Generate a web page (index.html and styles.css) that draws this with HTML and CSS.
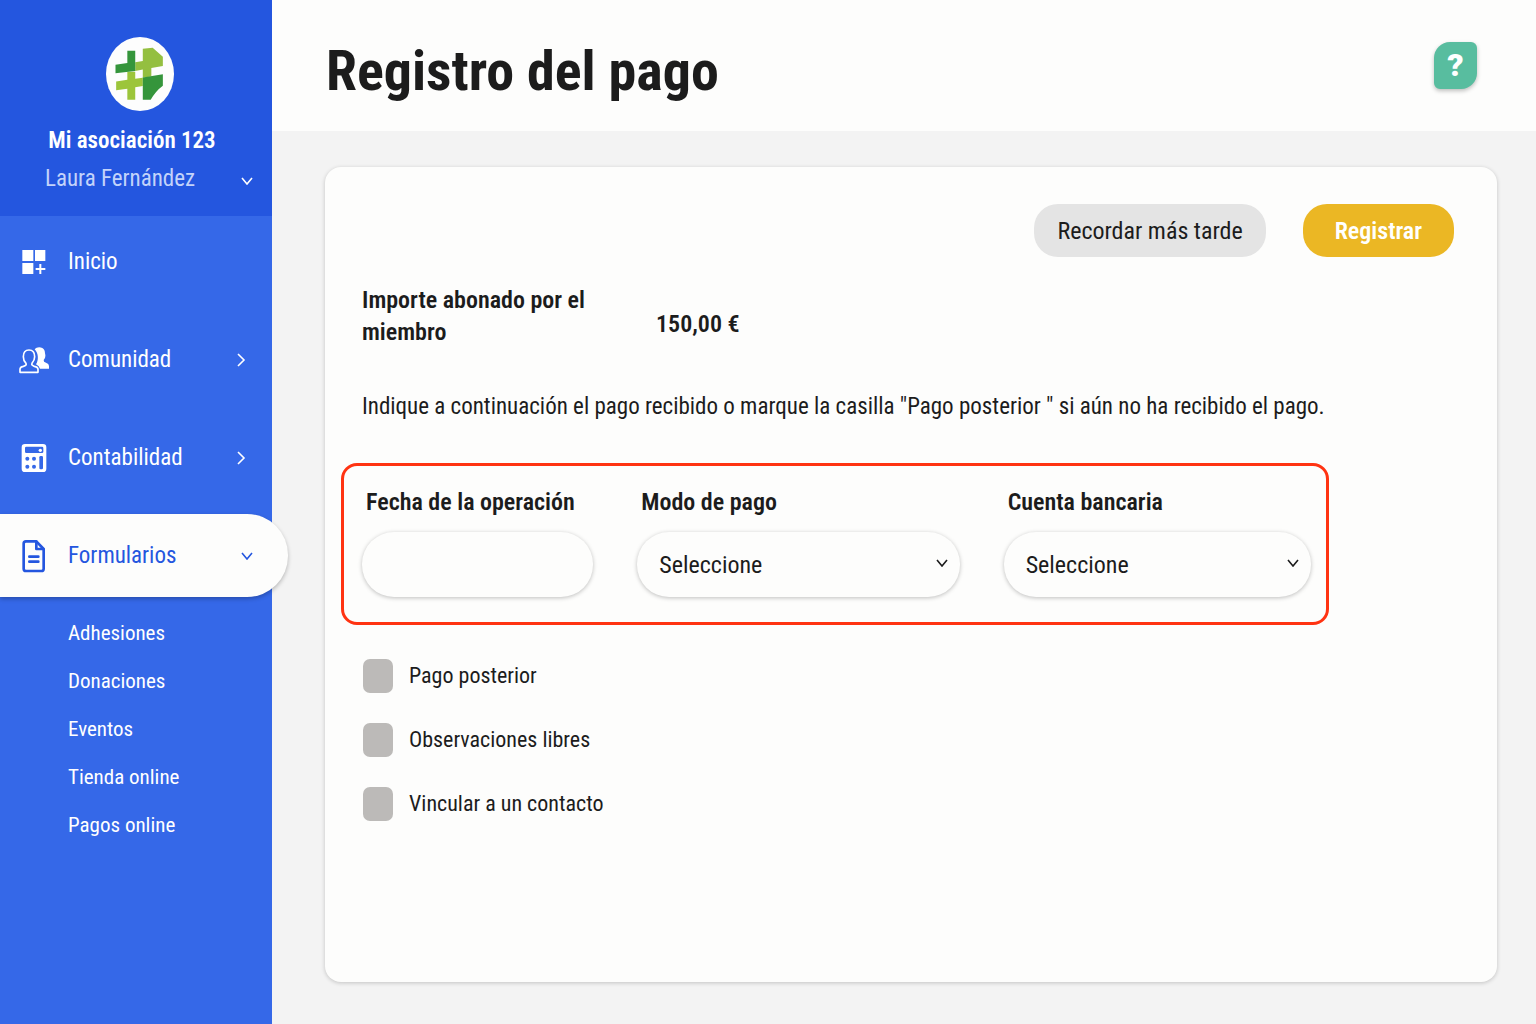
FILE: index.html
```html
<!DOCTYPE html>
<html lang="es">
<head>
    <meta charset="UTF-8">
    <meta name="viewport" content="width=device-width, initial-scale=1.0">
    <title>Registro del pago</title>
    <link rel="stylesheet" href="styles.css">
</head>
<body>
    <div class="layout">
        <aside class="sidebar">
            <div class="profile">
                <div class="logo">
                    <svg viewBox="318 48 203 225" aria-hidden="true">
                        <path fill="#9cc53a" d="M347 183L381 178V154H405V175L428 172V197L405 201V239H381V205L347 210Z"/>
                        <path fill="#94bf40" d="M428 84L458 81L489 108V136L454 142V168L428 172V147L405 151V125L428 121Z"/>
                        <path fill="#35953b" d="M381 90H405V151L345 158V132L381 127Z"/>
                        <path fill="#35953b" d="M428 171L489 161V196Q467 212 452 239H428Z"/>
                    </svg>
                </div>
                <p class="profile-name">Mi asociación 123</p>
                <button type="button" class="profile-user">
                    <span>Laura Fernández</span>
                    <svg class="chevron-down" viewBox="0 0 12 8" aria-hidden="true"><path d="M1 1L6 7L11 1"/></svg>
                </button>
            </div>
            <nav>
                <ul class="menu">
                    <li>
                        <a class="menu-item" href="#">
                            <span class="menu-icon">
                                <svg width="26" height="26" viewBox="60 78 78 78" aria-hidden="true">
                                    <path fill="currentColor" d="M64 81h33v33H64zM102 81h31v33H102zM64 120h33v33H64zM115 123h6v12h12v6h-12v12h-6v-12h-11v-6h11z"/>
                                </svg>
                            </span>
                            <span class="menu-label">Inicio</span>
                        </a>
                    </li>
                    <li>
                        <a class="menu-item" href="#">
                            <span class="menu-icon">
                                <svg width="32" height="28" viewBox="54 378 96 84" aria-hidden="true">
                                    <path fill="currentColor" d="M104 388c5-6 14-8 23-4c6 3 8 9 8 16c3 9 0 16-4 20q-1 6 7 8q9 3 9 10v8h-27q-2-8-12-13c8-12 8-32-4-45z"/>
                                    <path fill="none" stroke="currentColor" stroke-width="5" stroke-linejoin="round" d="M60 457v-9q0-7 10-9q11-3 8-9c-5-5-8-12-8-20c0-13 7-20 17-20s17 7 17 20c0 8-4 15-8 20q-3 6 7 9q11 2 11 9v9z"/>
                                </svg>
                            </span>
                            <span class="menu-label">Comunidad</span>
                            <svg class="chevron-right" viewBox="0 0 24 14" aria-hidden="true"><path d="M9 1L15 7L9 13"/></svg>
                        </a>
                    </li>
                    <li>
                        <a class="menu-item" href="#">
                            <span class="menu-icon">
                                <svg width="26" height="30" viewBox="63 72 78 90" aria-hidden="true">
                                    <path fill="currentColor" fill-rule="evenodd" d="M75 75h54q10 0 10 10v64q0 10-10 10H75q-10 0-10-10V85q0-10 10-10zM79 83q-4 0-4 4v11q0 4 4 4h47q4 0 4-4V87q0-4-4-4z"/>
                                    <circle cx="121" cy="94" r="5" fill="currentColor"/>
                                    <g fill="#3568e8">
                                        <circle cx="82" cy="119" r="6"/>
                                        <circle cx="102" cy="119" r="6"/>
                                        <circle cx="82" cy="143" r="6"/>
                                        <circle cx="102" cy="143" r="6"/>
                                        <rect x="118" y="111" width="11" height="40" rx="4"/>
                                    </g>
                                </svg>
                            </span>
                            <span class="menu-label">Contabilidad</span>
                            <svg class="chevron-right" viewBox="0 0 24 14" aria-hidden="true"><path d="M9 1L15 7L9 13"/></svg>
                        </a>
                    </li>
                    <li>
                        <a class="menu-item active" href="#">
                            <span class="menu-icon">
                                <svg width="26" height="34" viewBox="63 356 78 102" fill="none" stroke="currentColor" stroke-width="8" stroke-linejoin="round" stroke-linecap="round" aria-hidden="true">
                                    <path d="M78 363h31l22 23v59q0 7-7 7H78q-7 0-7-7v-75q0-7 7-7z"/>
                                    <path d="M109 364v22h21M88 409h27M88 424h27"/>
                                </svg>
                            </span>
                            <span class="menu-label">Formularios</span>
                            <svg class="chevron-down" viewBox="0 0 12 8" aria-hidden="true"><path d="M1 1L6 7L11 1"/></svg>
                        </a>
                        <ul class="submenu">
                            <li><a href="#">Adhesiones</a></li>
                            <li><a href="#">Donaciones</a></li>
                            <li><a href="#">Eventos</a></li>
                            <li><a href="#">Tienda online</a></li>
                            <li><a href="#">Pagos online</a></li>
                        </ul>
                    </li>
                </ul>
            </nav>
        </aside>

        <main class="main">
            <header class="header">
                <h1>Registro del pago</h1>
                <button type="button" class="help">?</button>
            </header>

            <form class="card">
                <div class="actions">
                    <button type="button" class="btn btn-secondary">Recordar más tarde</button>
                    <button type="submit" class="btn btn-primary">Registrar</button>
                </div>

                <dl class="amount">
                    <dt>Importe abonado por el miembro</dt>
                    <dd>150,00 €</dd>
                </dl>

                <p class="hint">Indique a continuación el pago recibido o marque la casilla "Pago posterior " si aún no ha recibido el pago.</p>

                <div class="fields">
                    <div class="field">
                        <label for="fecha">Fecha de la operación</label>
                        <input type="text" id="fecha" class="control">
                    </div>
                    <div class="field">
                        <label for="modo">Modo de pago</label>
                        <div class="select">
                            <select id="modo" class="control">
                                <option>Seleccione</option>
                            </select>
                            <svg class="chevron-down" viewBox="0 0 12 8" aria-hidden="true"><path d="M1 1L6 7L11 1"/></svg>
                        </div>
                    </div>
                    <div class="field">
                        <label for="cuenta">Cuenta bancaria</label>
                        <div class="select">
                            <select id="cuenta" class="control">
                                <option>Seleccione</option>
                            </select>
                            <svg class="chevron-down" viewBox="0 0 12 8" aria-hidden="true"><path d="M1 1L6 7L11 1"/></svg>
                        </div>
                    </div>
                </div>

                <div class="options">
                    <label class="option"><input type="checkbox"> Pago posterior</label>
                    <label class="option"><input type="checkbox"> Observaciones libres</label>
                    <label class="option"><input type="checkbox"> Vincular a un contacto</label>
                </div>
            </form>
        </main>
    </div>
</body>
</html>
```

FILE: styles.css
```css
* {
    margin: 0;
    padding: 0;
    box-sizing: border-box;
}

body {
    font-family: "Roboto Condensed", Roboto, "Liberation Sans", sans-serif;
    font-size: 23px;
    line-height: 32px;
    color: #1c1c1c;
    background: #f3f3f3;
}

button, input, select {
    font-family: inherit;
    color: inherit;
    border: none;
}

button {
    cursor: pointer;
}

ul {
    list-style: none;
}

a {
    color: inherit;
    text-decoration: none;
}

.layout {
    display: flex;
    min-height: 100vh;
}

/* Sidebar */
.sidebar {
    width: 272px;
    flex-shrink: 0;
    background: #3568e8;
    color: #fff;
}

.profile {
    padding: 37px 0 21px;
    background: #2456df;
}

.logo {
    width: 68px;
    height: 74px;
    margin: 0 98px 14px auto;
    border-radius: 50%;
    background: #fdfdfd;
}

.logo svg {
    display: block;
    width: 100%;
    height: 100%;
}

.profile-name {
    padding-right: 8px;
    margin-bottom: 6px;
    font-weight: 600;
    text-align: center;
}

.profile-user {
    display: flex;
    justify-content: space-between;
    align-items: center;
    width: 100%;
    padding: 0 19px 0 45px;
    background: none;
    color: #c3d3fa;
    font-size: 23px;
    line-height: 32px;
}

.profile-user svg {
    color: #fff;
    margin-top: 4px;
}

.chevron-down,
.chevron-right {
    flex-shrink: 0;
    fill: none;
    stroke: currentColor;
    stroke-width: 1.6;
}

.chevron-down {
    width: 12px;
    height: 8px;
}

.chevron-right {
    width: 24px;
    height: 14px;
}

.menu {
    display: flex;
    flex-direction: column;
    gap: 15px;
    padding-top: 4px;
}

.menu-item {
    display: flex;
    align-items: center;
    gap: 18px;
    height: 83px;
    padding: 0 19px 0 18px;
}

.menu-icon {
    display: flex;
    justify-content: center;
    width: 32px;
}

.menu-label {
    flex: 1;
}

.menu-item.active {
    position: relative;
    margin-right: -16px;
    padding-right: 35px;
    border-radius: 0 41px 41px 0;
    background: #fdfdfc;
    color: #2456df;
    box-shadow: 0 2px 4px rgba(0, 0, 0, 0.25);
}

.submenu {
    padding: 12px 0 24px 68px;
    font-size: 21px;
    line-height: 48px;
}

.submenu a {
    display: block;
}

/* Main area */
.main {
    flex: 1;
    display: flex;
    flex-direction: column;
    min-width: 0;
}

.header {
    display: flex;
    justify-content: space-between;
    align-items: center;
    height: 131px;
    padding: 0 59px 0 54px;
    background: #fdfdfc;
}

h1 {
    margin-top: 10px;
    font-size: 56px;
    font-weight: 700;
    line-height: 64px;
}

.help {
    width: 43px;
    height: 47px;
    border-radius: 16px 6px;
    background: #58bd9f;
    color: #fff;
    font-family: Roboto, sans-serif;
    font-size: 32px;
    font-weight: 900;
    line-height: 47px;
    box-shadow: 0 2px 4px rgba(0, 0, 0, 0.25);
}

.card {
    flex: 1;
    margin: 36px 39px 42px 53px;
    padding: 37px 43px 37px 16px;
    border-radius: 16px;
    background: #fdfdfc;
    box-shadow: 0 1px 4px rgba(0, 0, 0, 0.2);
}

.actions {
    display: flex;
    justify-content: flex-end;
    gap: 37px;
    margin-bottom: 27px;
}

.btn {
    height: 53px;
    border-radius: 24px;
    font-size: 24px;
}

.btn-secondary {
    padding: 0 23px;
    background: #e4e4e4;
}

.btn-primary {
    padding: 0 32px;
    background: #ebb724;
    color: #fff;
    font-weight: 600;
}

.amount {
    display: flex;
    align-items: flex-end;
    padding-left: 21px;
    margin-bottom: 43px;
    font-size: 24px;
    font-weight: 600;
}

.amount dt {
    width: 250px;
    margin-right: 44px;
}

.amount dd {
    line-height: 48px;
}

.hint {
    padding-left: 21px;
    margin-bottom: 40px;
}

.fields {
    display: grid;
    grid-template-columns: 231fr 322fr 307fr;
    gap: 44px;
    margin-right: 125px;
    padding: 20px 15px 25px 18px;
    border: 3px solid #ff3312;
    border-radius: 16px;
}

.field label {
    display: block;
    padding-left: 4px;
    margin-bottom: 14px;
    font-size: 24px;
    font-weight: 600;
}

.control {
    display: block;
    width: 100%;
    height: 65px;
    padding: 0 22px;
    border-radius: 32px;
    background: #fdfdfc;
    font-size: 24px;
    box-shadow: 0 1px 4px rgba(0, 0, 0, 0.25);
    appearance: none;
}

.select {
    position: relative;
}

.select .chevron-down {
    position: absolute;
    right: 12px;
    top: 27px;
    pointer-events: none;
}

.options {
    display: flex;
    flex-direction: column;
    align-items: flex-start;
    gap: 30px;
    padding: 34px 0 0 22px;
}

.option {
    display: flex;
    align-items: center;
    gap: 16px;
    font-size: 22px;
    line-height: 34px;
}

.option input {
    width: 30px;
    height: 34px;
    border-radius: 7px;
    background: #bcbab8;
    appearance: none;
}

.option input:checked {
    background: #2456df;
}

@media (max-width: 1100px) {
    .fields {
        grid-template-columns: 1fr;
        margin-right: 0;
    }
}
```
